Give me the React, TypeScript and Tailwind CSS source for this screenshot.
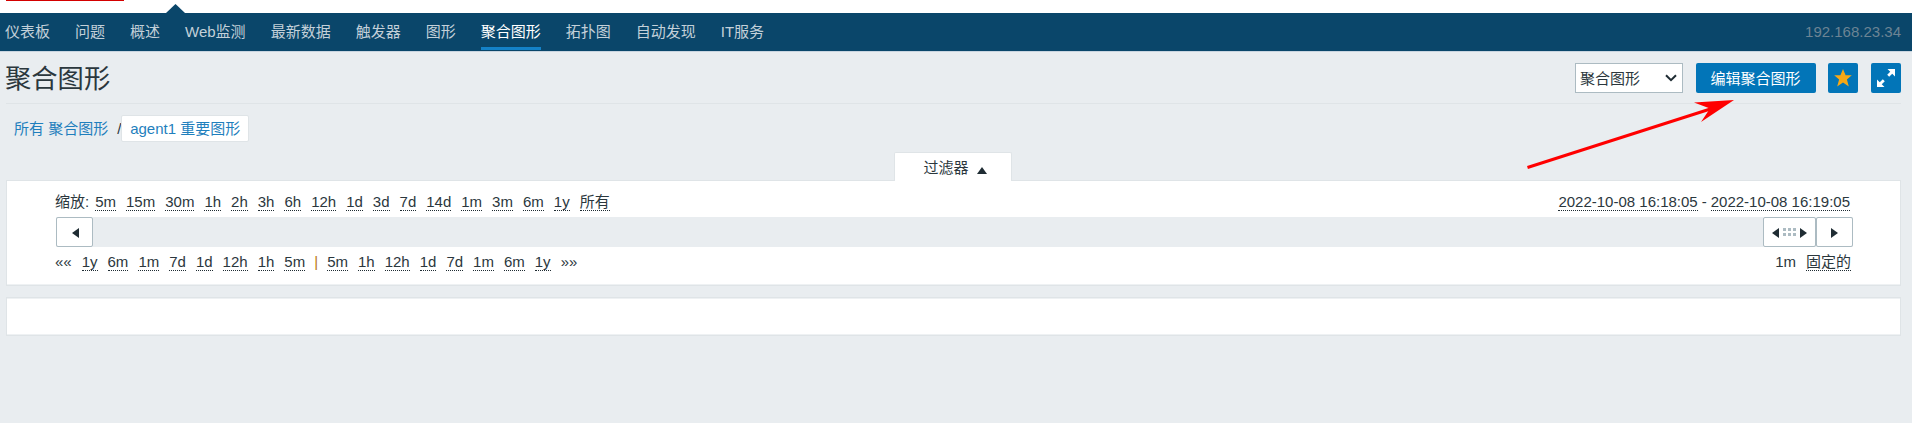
import React from 'react';

const nav = ['仪表板', '问题', '概述', 'Web监测', '最新数据', '触发器', '图形', '聚合图形', '拓扑图', '自动发现', 'IT服务'];
const zooms = ['5m', '15m', '30m', '1h', '2h', '3h', '6h', '12h', '1d', '3d', '7d', '14d', '1m', '3m', '6m', '1y', '所有'];
const back = ['1y', '6m', '1m', '7d', '1d', '12h', '1h', '5m'];
const forward = ['5m', '1h', '12h', '1d', '7d', '1m', '6m', '1y'];

function Dotted({ children }: { children: React.ReactNode }) {
  return <a className="h-[18px] border-b border-dotted border-[#1f2c33] leading-[18px]">{children}</a>;
}

function Arrow({ dir }: { dir: 'left' | 'right' }) {
  return (
    <svg className="mt-px" width="7" height="10" viewBox="0 0 7 10" fill="#1f2c33">
      <path d={dir === 'left' ? 'M7 0v10L0 5z' : 'M0 0v10l7-5z'} />
    </svg>
  );
}

export default function App() {
  return (
    <div className="relative flex h-[423px] w-full flex-col overflow-hidden bg-[#e9edf0] font-['Liberation_Sans','Noto_Sans_CJK_SC',sans-serif] text-[15px] leading-[18px] text-[#2b373d]">
      <header className="flex h-[13px] shrink-0 items-start bg-white">
        <div className="ml-[6px] h-px w-[118px] bg-[#d40000]" />
        <svg className="mt-1 ml-[42px]" width="20" height="9" viewBox="0 0 20 9">
          <path d="M0 9L9.5 0L19 9z" fill="#0a466a" />
        </svg>
      </header>
      <nav className="flex h-[39px] shrink-0 justify-between border-b border-[#c9d5e0] bg-[#0a466a] px-[5px]">
        <ul className="flex gap-[25px] text-[#c3d0d9]">
          {nav.map((n) => (
            <li
              key={n}
              className={
                n === '聚合图形'
                  ? 'h-[37px] border-b-3 border-[#1482c8] pt-[10px] whitespace-nowrap text-white'
                  : 'h-[37px] pt-[10px] whitespace-nowrap'
              }
            >
              {n}
            </li>
          ))}
        </ul>
        <span className="pt-[10px] pr-[6px] text-[#6c8494]">192.168.23.34</span>
      </nav>

      <main className="flex flex-col pr-[11px] pl-[6px]">
        <div className="flex h-[52px] items-center justify-between border-b border-[#dfe4e7]">
          <h1 className="-ml-px pt-[2px] text-[26.3px] leading-[30px]">聚合图形</h1>
          <div className="flex">
            <div className="flex h-[30px] w-[108px] items-center justify-between border border-[#acbbc2] bg-white pr-[5px] pl-[4px]">
              <span className="pt-[2px]">聚合图形</span>
              <svg className="mt-px" width="12" height="8" viewBox="0 0 12 8" fill="none" stroke="#1f2c33" strokeWidth="2">
                <path d="M1 1.2l5 5 5-5" />
              </svg>
            </div>
            <button className="ml-[13px] h-[30px] w-[120px] rounded-[2px] bg-[#0275b8] pt-[2px] pr-px text-white">编辑聚合图形</button>
            <button className="ml-3 flex h-[30px] w-[30px] items-center justify-center rounded-[2px] bg-[#0275b8]">
              <svg width="18" height="18" viewBox="0 0 18 18" fill="#f7a816">
                <path d="M9 0l2.600 6.300h6.200l-4.900 4.200 1.900 7L9 13.600l-5.800 3.900 1.900-7-4.900-4.200h6.200z" />
              </svg>
            </button>
            <button className="ml-[13px] flex h-[30px] w-[30px] items-center justify-center rounded-[2px] bg-[#0275b8]">
              <svg width="18" height="18" viewBox="0 0 18 18" fill="#fff" stroke="#fff">
                <path stroke="none" d="M10.500 0h7.500v7.500zM0 10.500v7.500h7.500z" />
                <path strokeWidth="2.8" d="M11.2 6.8L15 3M6.800 11.200L3 15" />
              </svg>
            </button>
          </div>
        </div>

        <div className="mt-[11px] flex h-[27px] items-center pl-[8px]">
          <a className="text-[#1f7fbd]">所有 聚合图形</a>
          <span className="ml-[9px] w-[4px]">/</span>
          <a className="flex h-[27px] w-[128px] items-center justify-center rounded-[2px] border border-[#dfe4e7] bg-white whitespace-nowrap text-[#1f7fbd]">
            agent1 重要图形
          </a>
        </div>

        <div className="z-10 mt-[10px] -mb-px flex justify-center pr-[2px]">
          <div className="flex h-[29px] w-[118px] items-center justify-center gap-2 rounded-t-[2px] border border-b-0 border-[#dfe4e7] bg-white pt-px pl-[5px]">
            <span>过滤器</span>
            <svg className="mt-[5px]" width="10" height="7" viewBox="0 0 10 7" fill="#1f2c33">
              <path d="M5 0l5 7H0z" />
            </svg>
          </div>
        </div>

        <section className="flex h-[106px] flex-col border border-[#dfe4e7] bg-white px-[49px] pt-[12px] shadow-[inset_0_-1px_#eef1f3]">
          <div className="flex h-[18px] justify-between">
            <div className="-ml-px flex gap-[10px]">
              <span className="-mr-[4px]">缩放:</span>
              {zooms.map((z) => (
                <Dotted key={z}>{z}</Dotted>
              ))}
            </div>
            <div className="flex gap-1 pr-px">
              <Dotted>2022-10-08 16:18:05</Dotted>
              <span>-</span>
              <Dotted>2022-10-08 16:19:05</Dotted>
            </div>
          </div>
          <div className="mt-[6px] -mr-[2px] flex h-[30px] bg-[#e9edf0]">
            <button className="flex w-[37px] items-center justify-center rounded-[2px] border border-[#acbbc2] bg-white pl-[2px]">
              <Arrow dir="left" />
            </button>
            <div className="grow" />
            <button className="flex w-[53px] items-center justify-center gap-1 rounded-[2px] border border-[#acbbc2] bg-white">
              <Arrow dir="left" />
              <svg width="13" height="8" viewBox="0 0 13 8" fill="#acbbc2">
                <path d="M0 0h3v3H0zM5 0h3v3H5zM10 0h3v3h-3zM0 5h3v3H0zM5 5h3v3H5zM10 5h3v3h-3z" />
              </svg>
              <Arrow dir="right" />
            </button>
            <button className="flex w-[37px] items-center justify-center rounded-[2px] border border-[#acbbc2] bg-white">
              <Arrow dir="right" />
            </button>
          </div>
          <div className="mt-[6px] flex h-[18px] justify-between">
            <div className="-ml-px flex gap-[10px]">
              <span>««</span>
              {back.map((b) => (
                <Dotted key={b}>{b}</Dotted>
              ))}
              <span className="-mx-px w-[4px] text-[#b87412]">|</span>
              {forward.map((f) => (
                <Dotted key={f}>{f}</Dotted>
              ))}
              <span>»»</span>
            </div>
            <div className="flex gap-[10px]">
              <span>1m</span>
              <Dotted>固定的</Dotted>
            </div>
          </div>
        </section>

        <section className="mt-[11px] h-[39px] border border-[#dfe4e7] bg-white shadow-[inset_0_1px_#eef1f3,inset_0_-1px_#eef1f3]" />
      </main>

      <svg className="pointer-events-none absolute top-[98px] left-[1525px]" width="212" height="74" viewBox="0 0 212 74">
        <path d="M2.500 69.500L190 9.500" stroke="#f00" strokeWidth="3" fill="none" />
        <path d="M209 2L169 4.500L185 10.500L176 24z" fill="#f00" />
      </svg>
    </div>
  );
}
